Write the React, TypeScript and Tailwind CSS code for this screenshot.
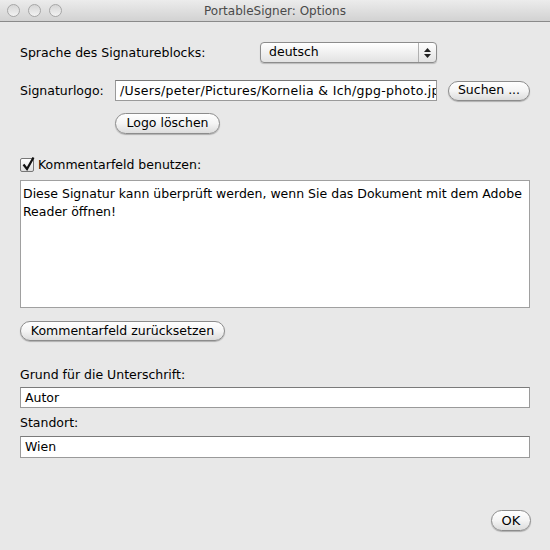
import React from 'react';

const font = { fontFamily: '"DejaVu Sans", "Noto Sans", sans-serif' };

const Pill: React.FC<{ children: React.ReactNode; className?: string }> = ({ children, className }) => (
    <button
        className={`flex items-center justify-center rounded-full border border-[#8c8c8c] bg-gradient-to-b from-white via-[#f4f4f4] to-[#dcdcdc] text-[12.5px] text-black shadow-[0_1px_1px_rgba(0,0,0,0.25)] ${className ?? ''}`}
    >
        {children}
    </button>
);

const Field: React.FC<{ value: string; className?: string }> = ({ value, className }) => (
    <div
        className={`flex items-center overflow-hidden whitespace-nowrap border border-[#9a9a9a] border-t-[#7a7a7a] bg-white px-[4px] pt-[1px] text-[12.5px] text-black ${className ?? ''}`}
    >
        {value}
    </div>
);

export default function App() {
    return (
        <div className="flex h-[550px] w-[550px] flex-col bg-[#e8e8e8] text-[12.5px] text-black" style={font}>
            {/* Title bar */}
            <div className="relative flex h-[22px] items-center border-b border-[#8a8a8a] bg-gradient-to-b from-[#ececec] to-[#d2d2d2] px-[7px]">
                <div className="flex gap-[8px]">
                    {[0, 1, 2].map(i => (
                        <div
                            key={i}
                            className="h-[13px] w-[13px] rounded-full border border-[#a6a6a6] bg-gradient-to-b from-[#d6d6d6] to-[#f2f2f2]"
                        />
                    ))}
                </div>
                <div className="flex-1 pr-[55px] pt-[1px] text-center text-[12px] text-[#4a4a4a]">PortableSigner: Options</div>
            </div>

            <div className="flex flex-col px-[20px]">
                {/* Sprache */}
                <div className="mt-[20px] flex h-[21px] items-center">
                    <div className="w-[240px] pt-[1px]">Sprache des Signatureblocks:</div>
                    <div className="flex h-[21px] w-[177px] items-center justify-between rounded-[4px] border border-[#8c8c8c] bg-gradient-to-b from-white to-[#e2e2e2] pl-[8px] shadow-[0_1px_1px_rgba(0,0,0,0.2)]">
                        <span>deutsch</span>
                        <div className="flex h-full w-[18px] flex-col items-center justify-center gap-[2px] border-l border-[#b0b0b0]">
                            <svg width="7" height="4" viewBox="0 0 7 4"><path d="M3.5 0L7 4H0z" fill="#222" /></svg>
                            <svg width="7" height="4" viewBox="0 0 7 4"><path d="M0 0h7L3.5 4z" fill="#222" /></svg>
                        </div>
                    </div>
                </div>

                {/* Signaturlogo */}
                <div className="mt-[17px] flex h-[21px] items-center">
                    <div className="w-[95px] pt-[2px]">Signaturlogo:</div>
                    <Field value="/Users/peter/Pictures/Kornelia & Ich/gpg-photo.jpg" className="h-[21px] w-[322px] tracking-[0.3px]" />
                    <Pill className="ml-[11px] h-[20px] w-[82px]">Suchen ...</Pill>
                </div>

                <div className="mt-[12px] flex">
                    <Pill className="ml-[95px] h-[21px] w-[105px]">Logo löschen</Pill>
                </div>

                {/* Kommentarfeld */}
                <div className="mt-[23px] flex h-[16px] items-center">
                    <div className="relative h-[14px] w-[14px] rounded-[2px] border border-[#777] bg-gradient-to-b from-white to-[#dedede]">
                        <svg className="absolute left-[1px] top-[-3px]" width="13" height="15" viewBox="0 0 13 15">
                            <path d="M1.5 8.5L5 13L11.5 1.5" fill="none" stroke="#111" strokeWidth="2.2" />
                        </svg>
                    </div>
                    <span className="ml-[4px] pt-[1px]">Kommentarfeld benutzen:</span>
                </div>

                <div className="mt-[7px] h-[128px] w-[510px] border border-[#a0a0a0] bg-white px-[2px] pt-[4px] leading-[18px]">
                    Diese Signatur kann überprüft werden, wenn Sie das Dokument mit dem Adobe Reader öffnen!
                </div>

                <div className="mt-[13px] flex">
                    <Pill className="h-[20px] w-[205px]">Kommentarfeld zurücksetzen</Pill>
                </div>

                {/* Grund */}
                <div className="mt-[26px] h-[16px] leading-[16px]">Grund für die Unterschrift:</div>
                <Field value="Autor" className="mt-[4px] h-[21px] w-[510px]" />
                <div className="mt-[7px] h-[16px] leading-[16px]">Standort:</div>
                <Field value="Wien" className="mt-[5px] h-[22px] w-[510px]" />

                <div className="mt-[52px] flex justify-end">
                    <Pill className="mr-[-1px] h-[21px] w-[40px] text-[13px]">OK</Pill>
                </div>
            </div>
        </div>
    );
}
